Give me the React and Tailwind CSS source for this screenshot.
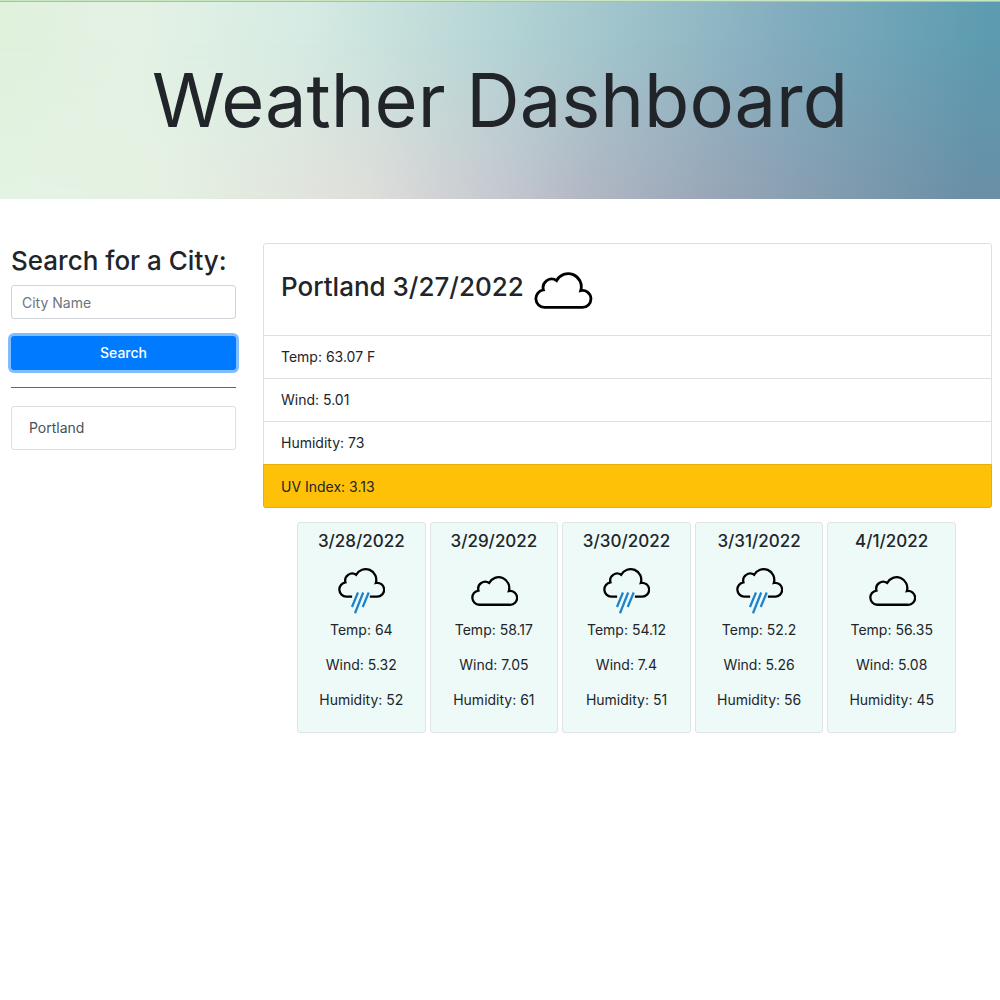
import React from "react";

const CLOUD_OPEN =
  "M17.6 36.4 H10.4 A8.8 8.8 0 0 1 9.4 18.9 A8.6 8.6 0 0 1 22.6 9.6 A13.1 13.1 0 0 1 46.7 19.6 A8.5 8.5 0 1 1 47.8 36.4 H39.4";
const CLOUD_CLOSED =
  "M10.4 36.4 A8.8 8.8 0 0 1 9.4 18.9 A8.6 8.6 0 0 1 22.6 9.6 A13.1 13.1 0 0 1 46.7 19.6 A8.5 8.5 0 1 1 47.8 36.4 Z";

function CloudIcon({ className }) {
  return (
    <svg viewBox="0 0 59 38" className={className} fill="none" aria-hidden="true">
      <path d={CLOUD_CLOSED} stroke="#000" strokeWidth="2.8" />
    </svg>
  );
}

function DayIcon({ rain, className }) {
  return (
    <svg viewBox="-1 0 59 59" className={className} fill="none" aria-hidden="true">
      {rain ? (
        <>
          <path d={CLOUD_OPEN} stroke="#000" strokeWidth="2.8" />
          <path
            d="M24.8 31.4 L17.4 49.2 M31.2 31.4 L21.1 56.8 M38 31.4 L30.6 49.2"
            stroke="#1f83cc"
            strokeWidth="2.8"
          />
        </>
      ) : (
        <path d={CLOUD_CLOSED} transform="translate(0 10)" stroke="#000" strokeWidth="2.8" />
      )}
    </svg>
  );
}

const current = ["Temp: 63.07 F", "Wind: 5.01", "Humidity: 73"];

const forecast = [
  { date: "3/28/2022", rain: true, temp: "64", wind: "5.32", humidity: "52" },
  { date: "3/29/2022", rain: false, temp: "58.17", wind: "7.05", humidity: "61" },
  { date: "3/30/2022", rain: true, temp: "54.12", wind: "7.4", humidity: "51" },
  { date: "3/31/2022", rain: true, temp: "52.2", wind: "5.26", humidity: "56" },
  { date: "4/1/2022", rain: false, temp: "56.35", wind: "5.08", humidity: "45" },
];

export default function App() {
  return (
    <div className="min-h-screen bg-white font-['Inter',sans-serif] text-sm text-[#212529]">
      <header className="relative border-t border-[#c8e6c0] bg-[linear-gradient(97deg,#e0f1dc_0%,#e4f2e5_14%,#d6ebe3_30%,#b3d3d4_50%,#84aebf_76%,#5c9bb0_97%)] py-[54px]">
        <div className="absolute inset-0 bg-[linear-gradient(97deg,#e3f3e3_0%,#e5f1e2_18%,#dfdeda_38%,#c6c8d0_51%,#b1b6c3_60%,#98a6b7_72%,#6a8fa6_97%)] [mask-image:linear-gradient(to_bottom,transparent_20%,black)]" />
        <div className="absolute inset-x-0 top-0 h-px bg-[#a3c2ae]" />
        <h1 className="relative text-center text-[74px] leading-[90px] font-normal">Weather Dashboard</h1>
      </header>

      <main className="flex items-start pt-[44px]">
        <aside className="w-1/4 pr-[14px] pl-[11px]">
          <form onSubmit={(e) => e.preventDefault()}>
            <label htmlFor="city" className="block text-[26px] leading-[36px] font-medium whitespace-nowrap">
              Search for a City:
            </label>
            <input
              id="city"
              type="text"
              placeholder="City Name"
              className="mt-[6px] block h-[34px] w-full rounded-[3px] border border-[#ced4da] px-[10px] placeholder:text-[#6c757d]"
            />
            <button
              type="submit"
              className="mt-[17px] block h-[34px] w-full rounded-[3px] bg-[#007bff] font-medium text-white ring-3 ring-[#80bdff]"
            >
              Search
            </button>
          </form>
          <hr className="mt-[17px] border-[#666]" />
          <button
            type="button"
            className="mt-[18px] block h-[44px] w-full rounded-[3px] border border-[#dfdfdf] px-[17px] text-left text-[#495057]"
          >
            Portland
          </button>
        </aside>

        <section className="w-3/4 pr-2 pl-[13px]">
          <ul className="rounded-[3px] border border-[#dfdfdf]">
            <li className="flex h-[91px] items-center px-[17px]">
              <h2 className="pb-[5px] text-[26px] leading-[36px] font-medium">Portland 3/27/2022</h2>
              <CloudIcon className="ml-[10px] h-[38px] w-[59px]" />
            </li>
            {current.map((line) => (
              <li key={line} className="border-t border-[#dfdfdf] px-[17px] pt-[10px] pb-[11px] leading-[21px]">
                {line}
              </li>
            ))}
            <li className="-mx-px -mb-px rounded-b-[3px] border border-[#e6ae06] bg-[#ffc107] px-[17px] pt-[11px] pb-[10px] leading-[21px]">
              UV Index: 3.13
            </li>
          </ul>

          <div className="mt-[14px] grid grid-cols-5 gap-1 pr-[36px] pl-[34px]">
            {forecast.map((day) => (
              <article
                key={day.date}
                className="rounded-[3px] border border-[#dfe5e4] bg-[#eefaf8] pt-[7px] pb-[22px] text-center leading-[21px]"
              >
                <h3 className="text-[17px] leading-[22px] font-medium">{day.date}</h3>
                <DayIcon rain={day.rain} className="mx-auto mt-[15px] h-[48px] w-[48px]" />
                <p className="mt-[4px]">Temp: {day.temp}</p>
                <p className="mt-[14px]">Wind: {day.wind}</p>
                <p className="mt-[14px]">Humidity: {day.humidity}</p>
              </article>
            ))}
          </div>
        </section>
      </main>
    </div>
  );
}
